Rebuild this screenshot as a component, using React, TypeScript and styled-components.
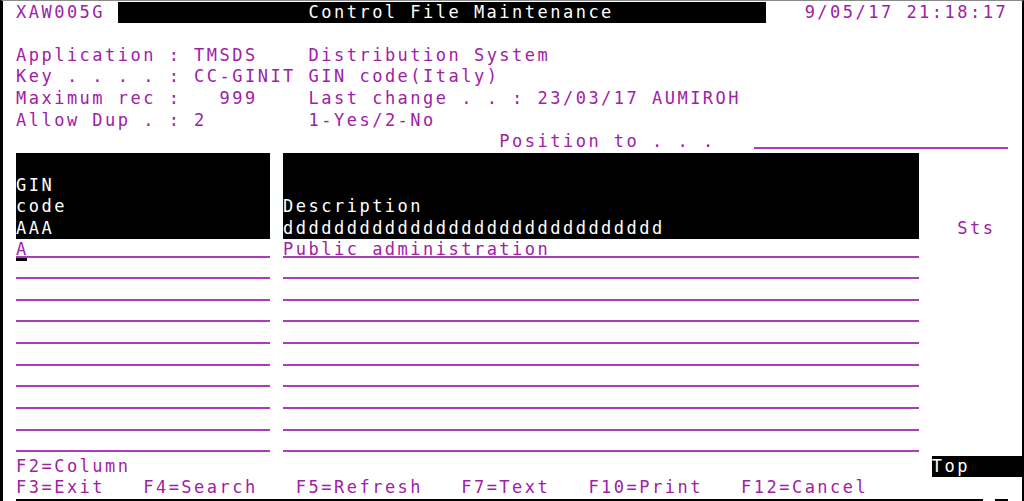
import React from 'react';
import styled, { createGlobalStyle } from 'styled-components';

const CW = 12.72;
const RH = 21.64;
const MAG = '#a020a8';
const LINE = '#ab3cba';
const w = (n: number) => `${(n * CW).toFixed(2)}px`;

const GlobalStyle = createGlobalStyle`
  html, body { margin: 0; padding: 0; background: #fff; }
  body { overflow: hidden; }
`;

const Screen = styled.div`
  box-sizing: border-box;
  width: 1024px;
  height: 501px;
  background: #fff;
  border-left: 3px solid #000;
  border-right: 2px solid #000;
  border-top: 1px solid #8a8a8a;
  padding: 0.5px 0 0 13px;
  overflow: hidden;
  font-family: "DejaVu Sans Mono", "Liberation Mono", monospace;
  font-size: 17px;
  letter-spacing: ${(CW - 17 * 0.60205).toFixed(3)}px;
  color: ${MAG};
  display: flex;
  flex-direction: column;
`;

const Row = styled.div`
  display: flex;
  flex: none;
  height: ${RH}px;
  line-height: ${RH}px;
  white-space: pre;
`;

const Cell = styled.span<{ $cols: number; $reverse?: boolean; $indent?: number }>`
  flex: none;
  width: ${(p) => w(p.$cols)};
  box-sizing: border-box;
  padding-left: ${(p) => (p.$indent ? w(p.$indent) : '0')};
  background: ${(p) => (p.$reverse ? '#000' : 'transparent')};
  color: ${(p) => (p.$reverse ? '#fff' : 'inherit')};
  overflow: hidden;
`;

const FillCell = styled.span<{ $reverse?: boolean }>`
  flex: 1;
  background: ${(p) => (p.$reverse ? '#000' : 'transparent')};
  color: ${(p) => (p.$reverse ? '#fff' : 'inherit')};
`;

const Field = styled.span<{ $cols: number }>`
  flex: none;
  box-sizing: border-box;
  width: ${(p) => w(p.$cols)};
  height: ${RH - 3.5}px;
  border-bottom: 2px solid ${LINE};
`;

const Gap = styled.span<{ $cols: number }>`
  flex: none;
  width: ${(p) => w(p.$cols)};
`;

const CursorChar = styled.span`
  position: relative;
  display: inline-block;
  &::after {
    content: '';
    position: absolute;
    left: 0;
    top: ${RH - 3}px;
    width: 11px;
    height: 3px;
    background: #000;
  }
`;

const HeaderBlock = styled.div`
  display: flex;
  flex: none;
  height: ${RH * 4}px;
`;

const HeadBox = styled.div<{ $cols: number; $reverse?: boolean }>`
  flex: none;
  width: ${(p) => w(p.$cols)};
  background: ${(p) => (p.$reverse ? '#000' : 'transparent')};
  color: ${(p) => (p.$reverse ? '#fff' : 'inherit')};
  display: flex;
  flex-direction: column;
  justify-content: flex-end;
`;

const HeadLine = styled.div`
  height: ${RH}px;
  line-height: ${RH}px;
  white-space: pre;
`;

const subfile = [
  { code: 'A', desc: 'Public administration' },
  ...Array.from({ length: 9 }, () => ({ code: '', desc: '' })),
];

export default function App() {
  return (
    <>
      <GlobalStyle />
      <Screen>
        <Row>
          <Cell $cols={7}>XAW005G</Cell>
          <Gap $cols={1} />
          <Cell $cols={51} $reverse $indent={15}>Control File Maintenance</Cell>
          <Gap $cols={3} />
          <Cell $cols={16}>9/05/17 21:18:17</Cell>
        </Row>
        <Row />
        <Row>Application : TMSDS    Distribution System</Row>
        <Row>Key . . . . : CC-GINIT GIN code(Italy)</Row>
        <Row>Maximum rec :   999    Last change . . : 23/03/17 AUMIROH</Row>
        <Row>Allow Dup . : 2        1-Yes/2-No</Row>
        <Row>
          <Gap $cols={38} />
          <Cell $cols={20}>Position to . . .</Cell>
          <Field $cols={20} />
        </Row>
        <HeaderBlock>
          <HeadBox $cols={20} $reverse>
            <HeadLine>GIN</HeadLine>
            <HeadLine>code</HeadLine>
            <HeadLine>AAA</HeadLine>
          </HeadBox>
          <Gap $cols={1} />
          <HeadBox $cols={50} $reverse>
            <HeadLine>Description</HeadLine>
            <HeadLine>dddddddddddddddddddddddddddddd</HeadLine>
          </HeadBox>
          <Gap $cols={3} />
          <HeadBox $cols={3}>
            <HeadLine>Sts</HeadLine>
          </HeadBox>
        </HeaderBlock>
        {subfile.map((r, i) => (
          <Row key={i}>
            <Field $cols={20}>{i === 0 ? <CursorChar>{r.code}</CursorChar> : r.code}</Field>
            <Gap $cols={1} />
            <Field $cols={50}>{r.desc}</Field>
          </Row>
        ))}
        <Row>
          <Cell $cols={72}>F2=Column</Cell>
          <FillCell $reverse>Top</FillCell>
        </Row>
        <Row>F3=Exit   F4=Search   F5=Refresh   F7=Text   F10=Print   F12=Cancel</Row>
        <Row>
          <Cell $cols={76} $reverse />
          <Gap $cols={1} />
          <Cell $cols={1} $reverse />
        </Row>
      </Screen>
    </>
  );
}
